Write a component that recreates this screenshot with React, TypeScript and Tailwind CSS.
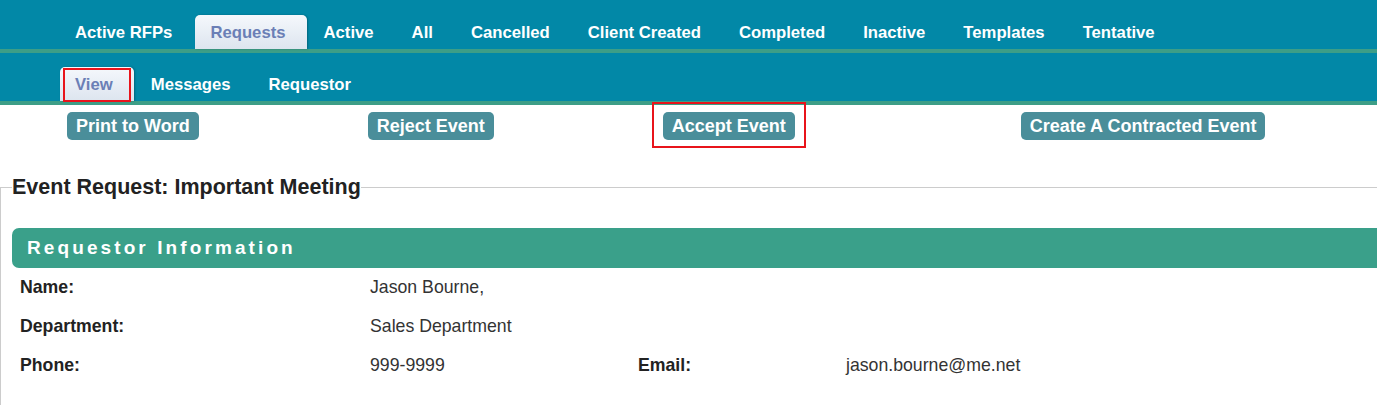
import React from "react";

const mainTabs = ["Active RFPs", "Requests", "Active", "All", "Cancelled", "Client Created", "Completed", "Inactive", "Templates", "Tentative"];
const subTabs = ["View", "Messages", "Requestor"];

function Tab({ label, active, marked }: { label: string; active?: boolean; marked?: boolean }) {
  return (
    <div
      className={
        "relative flex h-[34px] items-center pt-[2px] pl-[15px] pr-[21px] mr-[2px] rounded-t-[5px] " +
        (active ? "bg-gradient-to-b from-[#f5f8fc] to-[#dde5ef] text-[#6b7fb6] shadow-[1px_0_2px_rgba(0,0,0,0.25)]" : "text-white")
      }
    >
      {label}
      {marked && <span className="absolute left-[3px] right-[3px] top-[1px] -bottom-[1px] border-2 border-[#e8141b]" />}
    </div>
  );
}

export default function App() {
  return (
    <div className="min-h-screen bg-white font-['Liberation_Sans',Arial,sans-serif] overflow-hidden">
      <div className="flex h-[53px] items-end border-b-4 border-[#3d9e87] bg-[#0288a7] pl-[60px] text-[16.7px] font-bold">
        {mainTabs.map((t) => (
          <Tab key={t} label={t} active={t === "Requests"} />
        ))}
      </div>
      <div className="flex h-[52px] items-end border-b-4 border-[#3d9e87] bg-[#0288a7] pl-[60px] text-[16.7px] font-bold">
        {subTabs.map((t) => (
          <Tab key={t} label={t} active={t === "View"} marked={t === "View"} />
        ))}
      </div>

      <div className="flex pl-[67px] pt-[7px] text-[18px] font-bold text-white">
        <button className="h-[28px] rounded-[5px] bg-[#4a8e9a] px-[9px] leading-none">Print to Word</button>
        <button className="ml-[169px] h-[28px] rounded-[5px] bg-[#4a8e9a] px-[9px] leading-none">Reject Event</button>
        <div className="relative ml-[169px]">
          <button className="h-[28px] rounded-[5px] bg-[#4a8e9a] px-[9px] leading-none">Accept Event</button>
          <span className="pointer-events-none absolute -left-[11px] -right-[11px] -top-[10px] -bottom-[8px] border-2 border-[#e8141b]" />
        </div>
        <button className="ml-[226px] h-[28px] rounded-[5px] bg-[#4a8e9a] px-[9px] leading-none">Create A Contracted Event</button>
      </div>

      <fieldset className="mt-[31px] w-[calc(100%+20px)] border-l border-t border-[#cccccc] pb-[30px]">
        <legend className="ml-[11px] text-[21.5px] font-bold text-[#222]">Event Request: Important Meeting</legend>
        <div className="ml-[11px] mt-[25px] flex h-[40px] items-center rounded-l-[7px] bg-[#3aa08a] pl-[15px] text-[19px] font-bold tracking-[3.1px] text-white">
          Requestor Information
        </div>
        <div className="grid grid-cols-[350px_268px_208px_1fr] pl-[19px] text-[17.7px] text-[#333]">
          <div className="flex h-[39px] items-center font-bold text-[#222]">Name:</div>
          <div className="flex h-[39px] items-center">Jason Bourne,</div>
          <div />
          <div />
          <div className="flex h-[39px] items-center font-bold text-[#222]">Department:</div>
          <div className="flex h-[39px] items-center">Sales Department</div>
          <div />
          <div />
          <div className="flex h-[39px] items-center font-bold text-[#222]">Phone:</div>
          <div className="flex h-[39px] items-center">999-9999</div>
          <div className="flex h-[39px] items-center font-bold text-[#222]">Email:</div>
          <div className="flex h-[39px] items-center">jason.bourne@me.net</div>
        </div>
      </fieldset>
    </div>
  );
}
